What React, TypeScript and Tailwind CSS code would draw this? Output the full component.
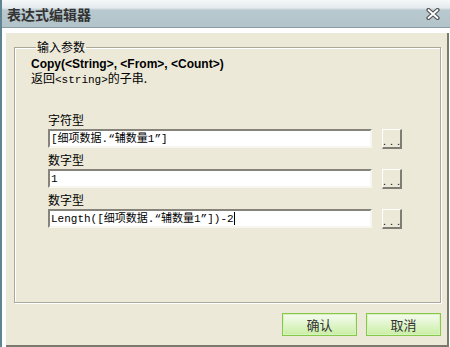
import React from "react";

const cjk = { fontFamily: '"Noto Sans CJK SC", "Liberation Sans", sans-serif' };
const mono = { fontFamily: '"Liberation Mono", "Noto Sans CJK SC", monospace' };

function Field({ label, value, caret }: { label: string; value: string; caret?: boolean }) {
  return (
    <div className="flex flex-col">
      <div className="h-[14px] text-[12px] leading-[14px] text-black mb-[2px]" style={cjk}>
        {label}
      </div>
      <div className="flex items-start gap-[10px]">
        <div
          className="w-[324px] h-[19px] bg-white border-t-2 border-l-2 border-t-[#85837a] border-l-[#85837a] border-b-2 border-r-2 border-b-[#f7f6f1] border-r-[#f7f6f1] flex items-center pl-[1px] text-[11px] leading-[14px] text-black whitespace-nowrap overflow-hidden"
          style={mono}
        >
          <span>{value}</span>
          {caret && <span className="inline-block w-[1px] h-[13px] bg-black" />}
        </div>
        <div className="w-[20px] h-[20px] bg-[#ece9d8] border-t border-l border-t-white border-l-white border-b-2 border-r-2 border-b-[#7e7d74] border-r-[#7e7d74] flex items-end justify-center pb-[4px]">
          <span className="text-[11px] leading-[4px] tracking-[4px] pl-[4px] text-black" style={{ fontFamily: '"Liberation Sans", sans-serif' }}>...</span>
        </div>
      </div>
    </div>
  );
}

function GreenButton({ label }: { label: string }) {
  return (
    <div
      className="w-[75px] h-[23px] border border-[#86c84a] bg-gradient-to-b from-[#f6fbf1] to-[#c9eea3] flex items-center justify-center text-[13px] text-[#333] shadow-[inset_0_0_0_1px_#d8f2bd]"
      style={cjk}
    >
      {label}
    </div>
  );
}

export default function App() {
  return (
    <div className="w-[450px] h-[347px] bg-white border-l-2 border-[#5f8494] flex flex-col overflow-hidden">
      <div className="h-[28px] shrink-0 border-b border-[#8c9ca3] bg-[linear-gradient(to_bottom,#f6f8f9_0px,#e4eaed_8px,#b9c9d0_10px,#b3c3ca_27px)] flex items-center justify-between pl-[5px] pr-[10px]">
        <span className="text-[14px] font-bold text-[#333] leading-none" style={cjk}>
          表达式编辑器
        </span>
        <svg width="14" height="12" viewBox="0 0 14 12">
          <path d="M2.5 2 L11.5 10 M11.5 2 L2.5 10" stroke="#555" strokeWidth="4.2" strokeLinecap="round" />
          <path d="M2.5 2 L11.5 10 M11.5 2 L2.5 10" stroke="#fff" strokeWidth="1.8" strokeLinecap="round" />
        </svg>
      </div>
      <div className="flex-1 pl-[4px] pt-[5px] pr-[1px] bg-white">
        <div className="h-full bg-[#ece9d8] border-r-2 border-b-2 border-[#7b7a70] flex flex-col pl-[8px] pr-[6px] pt-[7px]">
          <fieldset className="h-[263px] m-0 border border-[#aca899] shadow-[inset_1px_1px_0_#fff,1px_1px_0_#fff] pl-[16px] pr-0 pb-0 pt-0">
            <legend className="ml-[5px] px-[1px] text-[12px] leading-[14px] text-black" style={cjk}>
              输入参数
            </legend>
            <div className="mt-[3px] text-[12px] leading-[14px] font-bold text-black" style={{ fontFamily: '"Liberation Sans", sans-serif' }}>
              Copy(&lt;String&gt;, &lt;From&gt;, &lt;Count&gt;)
            </div>
            <div className="text-[12px] leading-[14px] text-black" style={cjk}>
              返回<span className="text-[11px]" style={mono}>&lt;string&gt;</span>的子串.
            </div>
            <div className="mt-[26px] ml-[17px] flex flex-col gap-[4px]">
              <Field label="字符型" value="[细项数据.“辅数量1”]" />
              <Field label="数字型" value="1" />
              <Field label="数字型" value="Length([细项数据.“辅数量1”])-2" caret />
            </div>
          </fieldset>
          <div className="flex justify-end gap-[9px] mt-[10px]">
            <GreenButton label="确认" />
            <GreenButton label="取消" />
          </div>
        </div>
      </div>
    </div>
  );
}
